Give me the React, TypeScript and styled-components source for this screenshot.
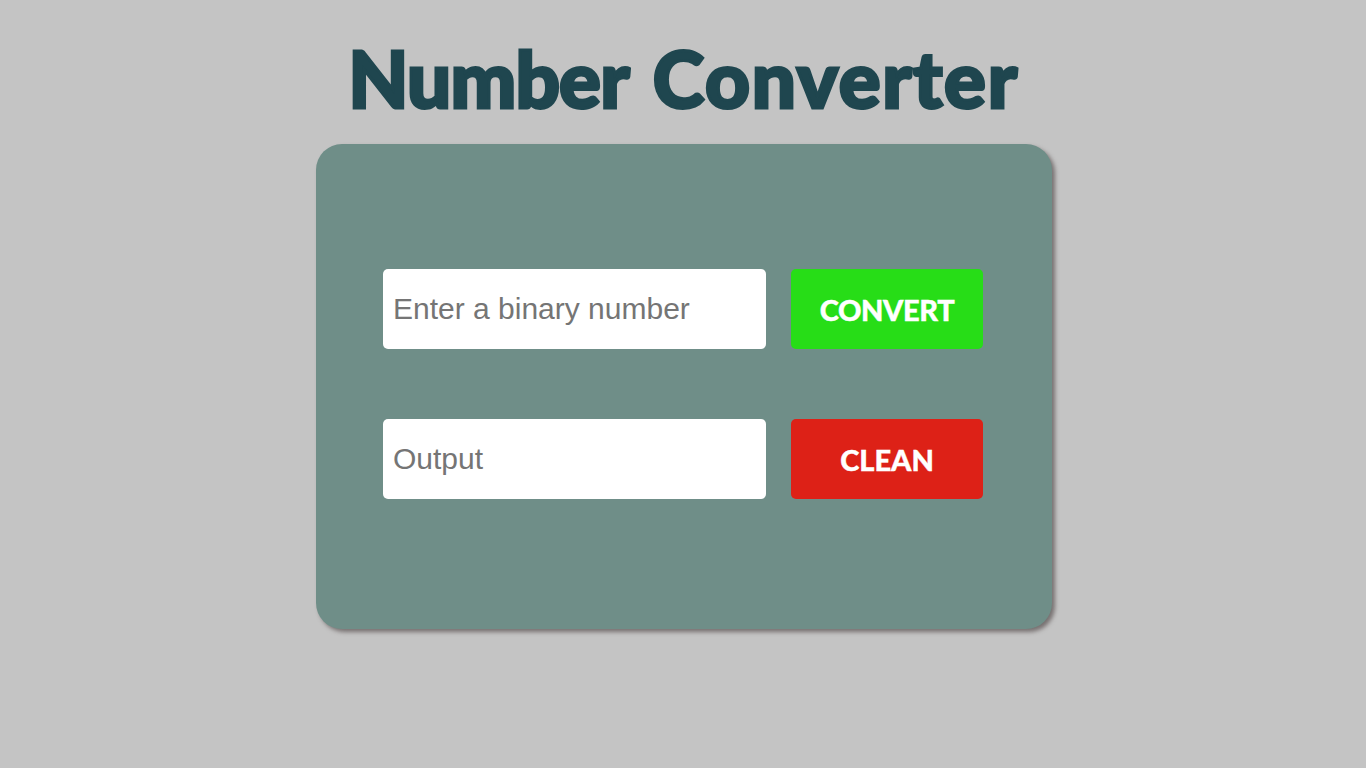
import React from 'react';
import styled, { createGlobalStyle } from 'styled-components';

const GlobalStyle = createGlobalStyle`
  * { box-sizing: border-box; }
  body { margin: 0; background: #c4c4c4; }
`;

const Page = styled.main`
  min-height: 768px;
  display: flex;
  flex-direction: column;
  align-items: center;
`;

const Title = styled.h1`
  display: flex;
  align-items: center;
  justify-content: center;
  gap: 24px;
  height: 144px;
  margin: 0;
  padding: 12px 0 0 1px;
  color: #1f464f;
  font: 900 78px/1 Lato, sans-serif;
  white-space: nowrap;
`;

const TitleWord = styled.span<{ $track: number }>`
  letter-spacing: ${({ $track }) => $track}px;
  -webkit-text-stroke: 3px #1f464f;
`;

const Card = styled.section`
  width: 736px;
  height: 485px;
  margin-left: 2px;
  padding: 125px 69px 0 67px;
  display: flex;
  flex-direction: column;
  gap: 70px;
  border-radius: 26px;
  background: #6f8e88;
  box-shadow: 3px 3px 4px #777171;
`;

const Row = styled.div`
  display: grid;
  grid-template-columns: 383px 192px;
  gap: 25px;
  height: 80px;
`;

const Field = styled.input`
  min-width: 0;
  padding: 0 10px;
  border: 0;
  border-radius: 5px;
  outline: 0;
  background: #fff;
  font: 30px 'Liberation Sans', Arial, sans-serif;
  &::placeholder { color: #757575; }
`;

const Button = styled.button<{ $color: string; $track: number }>`
  padding: 0;
  border: 0;
  border-radius: 5px;
  background: ${({ $color }) => $color};
  color: #fff;
  font: 900 29px Lato, sans-serif;
  letter-spacing: ${({ $track }) => $track}px;
  -webkit-text-stroke: 0.4px #fff;
`;

export default function App() {
  return (
    <>
      <GlobalStyle />
      <Page>
        <Title>
          <TitleWord $track={-0.8}>Number</TitleWord>
          <TitleWord $track={1.7}>Converter</TitleWord>
        </Title>
        <Card>
          <Row>
            <Field placeholder="Enter a binary number" />
            <Button $color="#27dd17" $track={-0.4}>CONVERT</Button>
          </Row>
          <Row>
            <Field placeholder="Output" readOnly />
            <Button $color="#dd2117" $track={0}>CLEAN</Button>
          </Row>
        </Card>
      </Page>
    </>
  );
}
